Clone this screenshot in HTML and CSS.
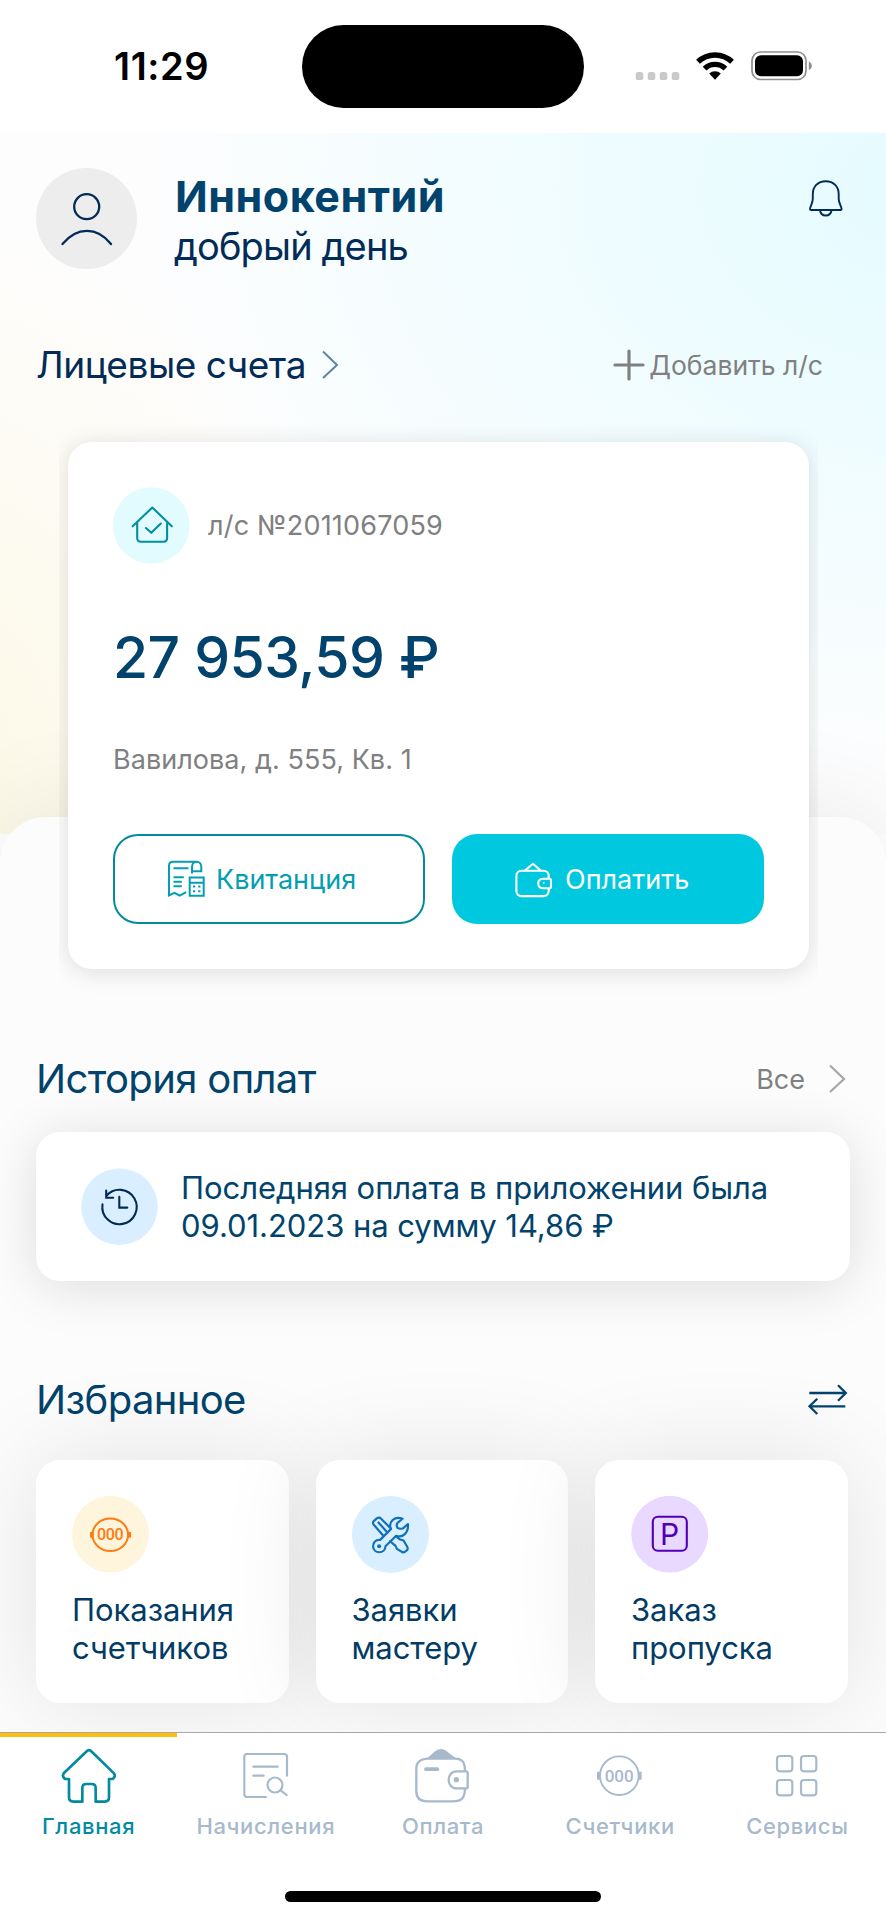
FILE: index.html
```html
<!DOCTYPE html>
<html lang="ru">
<head>
<meta charset="utf-8">
<title>Главная</title>
<link rel="stylesheet" href="styles.css">
</head>
<body>
<div class="screen">
  <div class="status">
    <div class="time">11:29</div>
    <div class="island"></div>
    <svg class="indicators" viewBox="630 45 190 40" width="190" height="40">
      <g fill="#c9c9c9"><rect x="635.7" y="72" width="7.6" height="8" rx="2.6"/><rect x="647.7" y="72" width="7.6" height="8" rx="2.6"/><rect x="659.7" y="72" width="7.6" height="8" rx="2.6"/><rect x="671.7" y="72" width="7.6" height="8" rx="2.6"/></g>
      <g fill="none" stroke="#000" stroke-width="5.4"><path d="M698 61.8a24.500 24.500 0 0 1 34 0"/><path d="M704.600 68.600a15 15 0 0 1 20.800 0"/></g>
      <path d="M715 79.800l-5.800-6.300a8.500 8.500 0 0 1 11.600 0z"/>
      <rect x="752" y="52" width="54" height="27.500" rx="8.500" fill="none" stroke="#8e8e8e" stroke-width="1.700"/>
      <rect x="755" y="55.300" width="48" height="21" rx="6"/>
      <path d="M808.800 61.500c4 1.500 4 7 0 8.500z" fill="#8e8e8e"/>
    </svg>
  </div>

  <div class="hero">
    <div class="greeting">
      <svg class="avatar" viewBox="36 168 101 101" width="101" height="101">
        <circle cx="86.500" cy="218.500" r="50.500" fill="#ededed"/>
        <g fill="none" stroke="#022b57" stroke-width="2.300" stroke-linecap="round"><circle cx="86.700" cy="206.700" r="12.500"/><path d="M62.500 244C77 226.500 97 226.500 111 244"/></g>
      </svg>
      <div class="hello"><div class="name">Иннокентий</div><div class="wish">добрый день</div></div>
      <svg class="bell" viewBox="805 177 40 42" width="40" height="42" fill="none" stroke="#022b57" stroke-width="1.900" stroke-linejoin="round">
        <path d="M824.700 181.200c-8 0-12.900 5.600-12.900 12.800v5c0 4-2.800 7.500-2.800 10.200q0 .8 1 .8h29.600q1 0 1-.8c0-2.700-2.900-6.200-2.900-10.200v-5c0-7.200-5-12.800-13-12.800zM819 210.500c1 6.600 10.500 6.600 11.500 0"/>
      </svg>
    </div>
    <div class="accounts-head">
      <div class="accounts-title">Лицевые счета</div>
      <svg class="chev" viewBox="0 0 18 30" width="18" height="30" fill="none" stroke="#5a86a3" stroke-width="2"><path d="M2 1.500L16 15 2 28"/></svg>
      <div class="add"><svg viewBox="0 0 32 32" width="32" height="32" stroke="#808080" stroke-width="3.200" stroke-linecap="round"><path d="M16 2v28M2 16h28"/></svg><span>Добавить л/с</span></div>
    </div>
  </div>

  <div class="sheet">
    <div class="account">
      <div class="acc-row">
        <svg viewBox="113 487 77 77" width="77" height="77"><circle cx="151.300" cy="525.500" r="38.300" fill="#e2fbff"/>
          <g fill="none" stroke="#018ea2" stroke-width="2.100" stroke-linecap="round" stroke-linejoin="round"><path d="M132.700 526.300L152.300 507.500 171.800 526.300M137.200 523v15q0 3.700 3.700 3.700h22.500q3.700 0 3.700-3.700v-15M146 528l5.300 4.800 9.500-9.300"/></g></svg>
        <span class="acc-no">л/с №2011067059</span>
      </div>
      <div class="amount">27 953,59 ₽</div>
      <div class="address">Вавилова, д. 555, Кв. 1</div>
      <div class="buttons">
        <div class="btn outline">
          <svg viewBox="167 860 39 40" width="39" height="40" fill="none" stroke="#039eb2" stroke-width="2">
            <path d="M198 862.700h-25q-4 0-4 4V896.500l5.500-2.700 5.200 2.900 6.500-3.500M192 874.500v-6.500c0-7 9.300-7 9.300 0v4.300h-9.300M173.500 869.300h15M173.500 878.200h10.300M173.500 882.700h8.300M173.500 887.300h8.300M189.700 878.500h14v18.200h-14zM189.700 883.700h14"/>
            <g fill="#039eb2" stroke="none"><path d="M193 886.500h2.200v2h-2.200zM198.200 886.500h2.200v2h-2.200zM193 891.200h2.200v2h-2.200zM198.200 891.200h2.200v2h-2.200z"/></g>
          </svg>
          <span>Квитанция</span>
        </div>
        <div class="btn solid">
          <svg viewBox="514 861 40 38" width="40" height="38" fill="none" stroke="#fff" stroke-width="2.100" stroke-linejoin="round">
            <path d="M525 871.500l8-6.800 7.500 6.800"/><rect x="516.400" y="871.800" width="32.300" height="25.300" rx="5"/>
            <path d="M551 881.300q0-1.600-1.600-1.600H543c-6.400 0-6.400 9.600 0 9.600h6.400q1.600 0 1.600-1.600z" fill="#00c8df"/><circle cx="543.700" cy="883.800" r=".9" fill="#fff" stroke="none"/>
          </svg>
          <span>Оплатить</span>
        </div>
      </div>
    </div>

    <div class="head history-head">
      <div class="title t-history">История оплат</div>
      <div class="all">Все</div>
      <svg class="all-chev" viewBox="0 0 18 30" width="18" height="30" fill="none" stroke="#a8a8a8" stroke-width="2.300"><path d="M2 1.500L16 15 2 28"/></svg>
    </div>
    <div class="history">
      <svg viewBox="81 1167 77 77" width="77" height="77"><circle cx="119.500" cy="1205.700" r="38.300" fill="#d9eeff"/>
        <g fill="none" stroke="#022b57" stroke-width="2.100" stroke-linecap="round"><path d="M102.500 1203.300A17.200 17.200 0 1 0 106.500 1194.700M106.200 1189.500v7.300h7M119.300 1195.700v10.900h8"/></g></svg>
      <div class="history-text"><div class="h1">Последняя оплата в приложении была</div><div class="h2">09.01.2023 на сумму 14,86 ₽</div></div>
    </div>

    <div class="head fav-head">
      <div class="title t-fav">Избранное</div>
      <svg class="swap" viewBox="807 1383 42 34" width="42" height="34" fill="none" stroke="#01436c" stroke-width="2.300"><path d="M809.300 1393h36M838 1385.300l7.800 7.700-7.800 7.700M845.300 1406.300h-36M817.300 1398.700l-7.800 7.600 7.800 7.700"/></svg>
    </div>
    <div class="cards">
      <div class="tile">
        <svg viewBox="72 1497 77 77" width="77" height="77"><circle cx="110.500" cy="1535.200" r="38.400" fill="#fff5dc"/>
          <ellipse cx="110.300" cy="1535.800" rx="17.800" ry="16.300" fill="none" stroke="#ff7a0f" stroke-width="2"/><g fill="#ff7a0f"><rect x="90" y="1533" width="3.600" height="5.600"/><rect x="127.500" y="1533" width="3.600" height="5.600"/><text x="97" y="1541.200" font-size="16" class="digits" textLength="26.600">000</text></g></svg>
        <div class="tile-text">Показания<br>счетчиков</div>
      </div>
      <div class="tile">
        <svg viewBox="1055 168 230 230" width="77" height="77"><circle cx="1170" cy="283" r="115" fill="#d9eeff"/>
          <g fill="none" stroke="#1070b8" stroke-width="6.500" stroke-linejoin="round" stroke-linecap="round">
            <path d="M1206 236C1182 227 1163 245 1171 267L1139 299C1124 298 1118 308 1118 318C1118 342 1155 342 1155 318L1187 287C1206 294 1225 278 1222 252L1208 264Q1198 268 1191 263Q1186 255 1191 248Z"/>
            <path d="M1148 286L1120 254Q1115 248 1120 243L1129 235Q1136 230 1142 236L1171 265M1134 247L1158 274M1169 303L1185 317 1189 326 1206 336Q1211 338 1220 329Q1223 324 1219 318L1209 301 1197 297 1186 288"/></g><circle cx="1136" cy="318" r="6" fill="#1070b8"/></svg>
        <div class="tile-text">Заявки<br>мастеру</div>
      </div>
      <div class="tile">
        <svg viewBox="631 1497 77 77" width="77" height="77"><circle cx="669.700" cy="1535.200" r="38.400" fill="#e9d8ff"/><rect x="652.800" y="1517.800" width="34" height="34" rx="5" fill="none" stroke="#5200b5" stroke-width="2.100"/><text x="659.900" y="1546" class="park" font-size="30">P</text></svg>
        <div class="tile-text">Заказ<br>пропуска</div>
      </div>
    </div>
  </div>

  <div class="tabbar">
    <div class="tabs">
      <div class="tab active">
        <svg viewBox="180 114 168 168" width="56" height="56" fill="none" stroke="currentColor" stroke-width="8" stroke-linejoin="round"><path d="M258 123Q264 118 270 123L339 190Q345 200 335 207H324V262Q324 275 311 275H284V234Q284 222 272 222H256Q244 222 244 234V275H217Q204 275 204 262V207H193Q182 201 188 190Z"/></svg>
        <span>Главная</span></div>
      <div class="tab">
        <svg viewBox="713 114 168 168" width="56" height="56" fill="none" stroke="currentColor" stroke-width="6.500" stroke-linecap="round"><path d="M860 197V140q0-8-8-8H740q-8 0-8 8V253q0 8 8 8H797M759 170h73M759 197h31"/><circle cx="824" cy="225" r="22.500"/><path d="M841 241l18 14"/></svg>
        <span>Начисления</span></div>
      <div class="tab">
        <svg viewBox="-84 114 168 168" width="56" height="56" fill="none" stroke="currentColor" stroke-width="7"><path d="M66 184C66 157 58 146 36 146H-46C-68 148-80 155-80 175V243C-80 266-68 274-48 274H30C56 274 65 264 66 236"/><path d="M-50 147L-24 124Q-5 111 10 123L42 147Z" fill="currentColor" stroke="none"/><path d="M74 189q0-5-5-5H41C9 184 9 235 41 235H69q5 0 5-5z"/><circle cx="40" cy="209" r="8" fill="currentColor" stroke="none"/><path d="M-51 177.500h34" stroke-width="11" stroke-linecap="round"/></svg>
        <span>Оплата</span></div>
      <div class="tab">
        <svg viewBox="447 114 168 168" width="56" height="56"><circle cx="529" cy="197" r="58" fill="none" stroke="currentColor" stroke-width="5.500"/><g fill="currentColor"><rect x="462" y="185" width="10" height="24" rx="2"/><rect x="586" y="185" width="10" height="24" rx="2"/><text x="485" y="216" font-size="51" class="digits" textLength="87">000</text></g></svg>
        <span>Счетчики</span></div>
      <div class="tab">
        <svg viewBox="978 114 168 168" width="56" height="56" fill="none" stroke="currentColor" stroke-width="6.500"><rect x="1002" y="138" width="46" height="46" rx="9"/><rect x="1074" y="138" width="46" height="46" rx="9"/><rect x="1002" y="210" width="46" height="46" rx="9"/><rect x="1074" y="210" width="46" height="46" rx="9"/></svg>
        <span>Сервисы</span></div>
    </div>
    <div class="home-indicator"></div>
  </div>
</div>
</body>
</html>
```

FILE: styles.css
```css
* { box-sizing: border-box; }
body { margin: 0; background: #fff; font-family: Inter, "Noto Sans", sans-serif; }
svg { display: block; flex: none; }
.screen { width: 886px; height: 1920px; overflow: hidden; display: flex; flex-direction: column; color: #01436c; white-space: nowrap; }

.status { height: 133px; flex: none; display: flex; align-items: flex-start; padding-left: 114px; background: #fff; color: #000; }
.time { width: 188px; margin-top: 42px; font-size: 38px; line-height: 48px; font-weight: 600; letter-spacing: 0.6px; }
.island { width: 282px; height: 83px; margin-top: 25px; border-radius: 42px; background: #000; }
.indicators { margin: 45px 0 0 46px; }

.hero {
  height: 701px; flex: none; padding: 35px 36px 0;
  background:
    radial-gradient(ellipse 470px 620px at -10% 95%, #fcf8e4 0%, rgba(253, 249, 232, .7) 40%, rgba(254, 253, 247, 0) 100%),
    radial-gradient(ellipse 800px 600px at 106% 8%, #e4fbff 0%, rgba(236, 252, 255, .8) 45%, rgba(250, 254, 255, 0) 100%),
    #fdfdfe;
}
.greeting { display: flex; align-items: flex-start; }
.hello { margin: 3px 0 0 38px; flex: 1; }
.name { font-size: 43px; line-height: 50px; font-weight: 700; letter-spacing: 0.5px; }
.wish { font-size: 38px; line-height: 50px; color: #022b57; letter-spacing: -0.85px; margin-left: -1px; }
.bell { margin: 9px 4px 0 0; }
.accounts-head { display: flex; align-items: center; height: 60px; margin-top: 64px; }
.accounts-title { font-size: 37px; line-height: 60px; color: #022b57; letter-spacing: -0.45px; }
.chev { margin-left: 15px; }
.add { display: flex; align-items: center; gap: 4px; margin-left: auto; margin-right: 27px; font-size: 26.5px; line-height: 40px; color: #808080; }

.sheet { flex: none; height: 915px; margin-top: -17px; padding: 0 36px; border-radius: 46px 46px 0 0; background: #fcfcfc; box-shadow: 0 0 110px rgba(0, 0, 0, .09); }
.account {
  width: 741px; height: 527px; margin: -375px 0 0 32px; padding: 45px; border-radius: 24px; background: #fff;
  box-shadow: 0 3px 24px rgba(0, 0, 0, .13); clip-path: inset(-28px -9px -28px -9px);
}
.acc-row { display: flex; align-items: center; gap: 18px; height: 77px; color: #808080; font-size: 27px; letter-spacing: 0.2px; }
.amount { margin-top: 64px; font-size: 57px; line-height: 60px; font-weight: 500; letter-spacing: -0.55px; }
.address { margin-top: 52px; font-size: 27px; line-height: 40px; color: #808080; letter-spacing: 0.05px; }
.buttons { display: flex; gap: 27px; margin-top: 54px; }
.btn { width: 312px; height: 90px; border-radius: 25px; display: flex; align-items: center; font-size: 27px; }
.outline { border: 2px solid #028b9f; color: #039eb2; padding-left: 52px; gap: 10px; }
.solid { background: #00c8df; color: #fff; padding-left: 62px; gap: 11px; }

.head { display: flex; align-items: center; height: 60px; }
.history-head { margin-top: 80px; }
.title { font-size: 40px; line-height: 60px; letter-spacing: -0.65px; }
.all { margin-left: auto; font-size: 27px; color: #808080; }
.all-chev { margin: 0 4px 0 23px; }
.history { display: flex; align-items: center; height: 149px; margin-top: 23px; padding-left: 45px; width: 814px; border-radius: 24px; background: #fff; box-shadow: 0 6px 54px rgba(0, 0, 0, .13); }
.history-text { margin: 0 0 0 23px; font-size: 31px; line-height: 37.5px; letter-spacing: -0.05px; }
.fav-head { margin-top: 89px; }
.swap { margin-left: auto; margin-right: 1px; }
.cards { display: flex; gap: 27px; margin-top: 30px; }
.tile { width: 252.5px; height: 243px; padding: 36px 0 0 36px; border-radius: 24px; background: #fff; box-shadow: 0 0 100px rgba(0, 0, 0, .105); }
.tile-text { margin-top: 18px; font-size: 31px; line-height: 37.5px; color: #023c66; letter-spacing: -0.05px; }
.digits { font-family: Roboto, sans-serif; font-weight: 500; }
.park { fill: #5200b5; font-family: Inter, sans-serif; font-weight: 400; }

.tabbar { flex: none; height: 188px; border-top: 1px solid #a6a6ab; background: #fff; display: flex; flex-direction: column; align-items: center; }
.tabs { display: flex; width: 100%; height: 158px; }
.tab { flex: 1; display: flex; flex-direction: column; align-items: center; padding-top: 11px; border-top: 4px solid transparent; color: #a7b9cc; font-size: 22px; font-weight: 500; letter-spacing: 0.65px; }
.tab svg { letter-spacing: 0; }
.tab span { margin-top: 8px; line-height: 28px; }
.active { border-top-color: #ffbe0a; color: #028b9f; }
.home-indicator { width: 316px; height: 11px; border-radius: 6px; background: #000; }
```
